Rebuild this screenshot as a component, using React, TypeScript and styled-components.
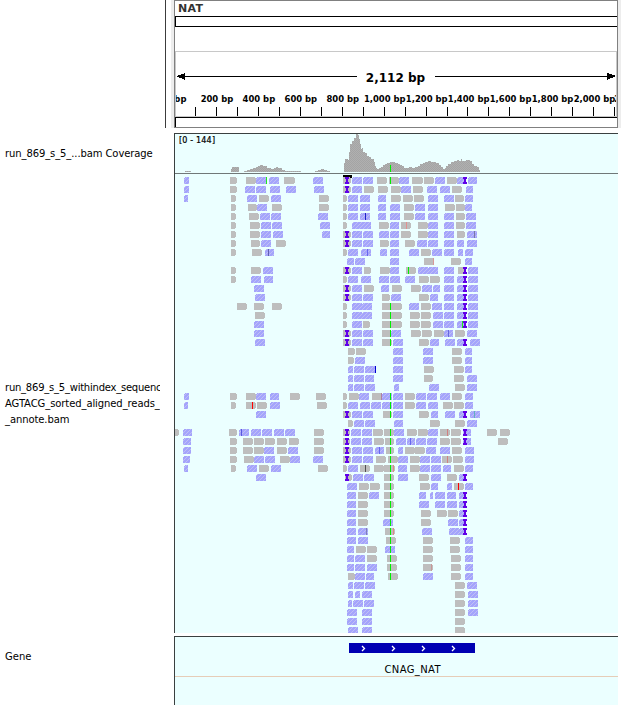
import React from 'react';
import styled, { createGlobalStyle } from 'styled-components';

const GlobalStyle = createGlobalStyle`
  * { box-sizing: border-box; }
  body { margin: 0; background: #fff; font-family: "DejaVu Sans", sans-serif; color: #000; }
`;

const TRACK_X = 175;
const TRACK_W = 443;

const Page = styled.div`
  width: 640px;
  height: 705px;
  overflow: hidden;
  display: flex;
  flex-direction: column;
  background: #fff;
`;

const Header = styled.header`
  display: flex;
  height: 128px;
  padding-left: 165px;
`;

const HeaderGutter = styled.div<{ $width: number; $line?: boolean }>`
  width: ${p => p.$width}px;
  border-left: ${p => (p.$line ? '1px solid #3c3c3c' : 'none')};
  background: ${p => (p.$line ? '#fff' : '#ededed')};
`;

const HeaderBody = styled.div`
  width: 444px;
  display: flex;
  flex-direction: column;
  border: 1px solid #808080;
  background: #fff;
`;

const Chromosome = styled.div`
  height: 15px;
  padding: 0 0 0 3px;
  font: bold 11px/15px "DejaVu Sans", sans-serif;
  letter-spacing: 0.3px;
  color: #333;
`;

const Bar = styled.div<{ $height: number; $open?: boolean }>`
  height: ${p => p.$height}px;
  border: 1px solid #000;
  border-right: 0;
  border-bottom-width: ${p => (p.$open ? 0 : 1)}px;
`;

const RulerFrame = styled.div`
  height: 66px;
  margin-top: 24px;
  border: 1px solid #c8c8c8;
  overflow: hidden;
`;

const Drawing = styled.svg`
  display: block;
  flex: none;
`;

const Track = styled.section<{ $height: number; $gap?: number }>`
  display: flex;
  flex: none;
  height: ${p => p.$height}px;
  margin-top: ${p => p.$gap ?? 0}px;
`;

const TrackName = styled.div<{ $top: number }>`
  width: 160px;
  margin-right: 14px;
  padding: ${p => p.$top}px 0 0 5px;
  overflow: hidden;
`;

const NameLine = styled.div<{ $spacing?: number }>`
  white-space: nowrap;
  font-size: 10px;
  line-height: 16px;
  letter-spacing: ${p => p.$spacing ?? 0}px;
`;

const TrackView = styled.div<{ $top?: boolean }>`
  width: 444px;
  border-left: 1px solid #3a4040;
  border-top: ${p => (p.$top ? '1px solid #3a4040' : 'none')};
  background: #ebffff;
  overflow: hidden;
`;

const READS: string[] = [
  'b184-189 g230-237 g246-256 b256-267 b269-279 g284-295 b313-323 g343-351 b352-362 b363-373 g377-387 g389-399 b399-409 g412-423 g424-434 b435-445 g447-457 b457-466 b468-477',
  'b184-189 g230-237 b245-255 b256-266 b270-280 b286-296 b314-324 g343-351 b352-362 g364-374 g378-388 g391-401 b401-411 g413-423 b427-437 b440-450 g452-462 b466-473',
  'b184-188 g231-236 b247-257 g259-269 b271-281 g319-329 g343-347 b348-358 b360-370 b378-386 g391-401 g403-413 g414-424 b428-438 b444-454 g455-464 b465-473',
  'g231-236 g248-257 b257-267 g272-282 g319-329 g343-347 b348-358 b360-370 b378-386 b390-400 g404-414 b415-425 b428-438 g445-455 g456-465 b465-472',
  'g231-236 g249-259 b260-270 b271-281 b318-328 g343-347 b348-358 b360-370 b378-386 b390-400 g404-414 b415-425 b428-438 b444-454 g456-465 b466-476',
  'g231-236 g250-260 b261-271 b272-282 b320-330 g343-347 b352-362 b361-371 g379-389 b390-399 g401-411 g418-428 b428-438 b444-454 g456-465 b466-476',
  'g231-236 g250-260 b261-271 b273-283 b322-330 g343-351 b352-362 b363-373 b379-389 b390-399 g401-411 g418-428 b428-438 b444-454 g457-465 b467-477',
  'g231-236 g251-260 b261-271 g276-286 g343-351 b352-362 b363-373 g380-389 b390-399 g405-415 b417-427 b428-438 b444-454 b457-464 b467-477',
  'g231-236 g252-262 b265-274 g343-347 b348-358 b361-371 b380-387 b390-399 b409-419 g421-431 b432-442 b444-454 b458-463 b465-473',
  'b347-354 b355-365 b390-399 g424-434 g451-461 b465-472',
  'g231-236 g251-261 b263-273 g343-351 b352-362 g364-371 g380-390 b390-399 g406-416 b418-428 b428-438 b444-454 g458-466 b468-478',
  'g231-236 b251-261 b264-273 g343-347 b348-358 b361-371 b379-389 b390-400 b405-415 g419-429 g430-440 b444-454 b457-466 b468-478',
  'b254-264 g343-351 b352-362 g364-374 b381-389 g392-402 g411-421 b422-432 b433-440 b444-454 b457-466 b468-478',
  'b255-265 g343-351 b352-362 b363-373 g382-390 b391-401 g419-429 b430-438 b444-454 b457-466 b468-478',
  'g237-247 g254-264 g272-282 g343-347 b352-362 b362-372 g382-392 g391-402 b409-419 g421-431 b432-442 b444-454 b457-466 b468-478',
  'g255-265 g343-347 b352-362 b362-372 g382-392 g391-402 g410-420 g421-431 b433-443 b444-454 b457-466 b468-478',
  'b254-264 g343-347 b352-362 g363-370 g382-392 g391-402 g410-420 g421-431 b433-443 b444-454 b457-466 b468-478',
  'b254-264 g343-351 b352-362 b363-373 g382-392 b391-401 g411-421 g422-432 g434-444 b444-453 g455-465 b467-477',
  'b255-265 g343-351 b352-362 b363-373 g382-392 b393-403 g419-429 b430-439 b445-455 b457-466 b470-480',
  'g348-355 g356-366 b393-403 b423-433 g452-462 b465-472',
  'g348-354 b355-365 b393-403 b423-433 g452-462 b465-472',
  'b348-353 b354-364 b365-375 b393-403 g424-434 g454-464 b465-472',
  'b348-353 b354-364 b365-374 b393-403 g424-433 g454-464 b467-477',
  'b348-353 b354-364 b365-375 b394-399 b429-439 g455-465 b467-477',
  'b184-189 g230-237 g246-256 b256-266 b270-279 g290-300 g316-326 g343-347 g349-359 b359-369 g372-382 b382-392 b393-403 g405-415 b416-426 b427-437 b440-450 g452-462 b465-473',
  'b184-188 g231-236 g246-256 g257-267 b270-280 g317-327 g343-347 b348-358 b360-370 b371-381 b382-392 b393-403 g405-415 b416-426 b428-438 g443-453 g454-464 b465-473',
  'b256-266 g343-351 b352-362 b363-373 g383-392 b393-403 g419-429 b431-438 b445-455 b459-466 b470-480',
  'g348-353 b354-364 b365-375 b394-403 g430-440 g455-465 b467-477',
  'g175-179 b183-192 g229-237 b239-249 b251-261 b262-272 b274-284 b285-295 g314-324 g343-350 b351-361 b362-372 g373-383 g384-394 b394-404 g407-417 g418-428 b428-438 g440-450 g451-461 b463-471 g487-497 g500-510',
  'b183-191 g230-237 g243-253 g254-264 g265-275 g277-287 g289-299 g314-324 g343-350 b351-361 b362-372 g374-384 g385-394 b396-406 b407-415 b416-426 b427-437 g440-450 g451-461 b463-471 g498-508',
  'b183-191 g230-237 g243-253 g254-264 b264-274 g277-287 b288-298 g314-324 g343-351 b352-362 b363-373 b375-384 g386-394 b398-403 g405-415 g415-425 b426-436 b440-450 g452-462 b465-474',
  'b183-190 g230-237 g244-254 b254-264 b265-275 g280-290 b290-300 b313-323 g343-351 b352-362 b363-373 g376-386 g388-398 b398-408 g410-420 b420-430 b431-441 g442-452 g453-463 b465-474',
  'b184-188 g231-236 b247-257 g259-269 b271-281 g318-328 g343-347 b348-358 g360-370 g374-384 g384-395 b398-407 g410-420 b420-430 b431-441 b443-451 g454-464 b465-473',
  'b256-266 g345-352 b353-363 b364-374 g384-394 b398-408 g419-429 b431-441 g447-457 b459-466',
  'b347-357 g359-369 g370-380 g384-394 g420-430 b431-438 b447-452 g454-464 b465-473',
  'b347-356 g358-368 b369-379 g384-394 b419-426 b430-433 b435-445 b447-456 b459-466',
  'b347-356 g358-368 g384-394 b419-429 b435-445 b447-457 b459-466',
  'b347-356 g358-368 g384-394 g421-431 g437-447 g448-458 b459-466',
  'b347-356 g358-368 b383-393 g421-431 b448-458 b459-466',
  'b347-356 b358-368 g385-395 b422-432 b449-459 b459-466',
  'b347-356 b358-368 g386-396 g423-433 g450-460 b465-473',
  'b347-354 g356-366 g367-377 b385-395 g423-433 g450-460 b465-473',
  'b347-354 b355-365 g367-377 g387-397 g423-433 g451-461 b465-473',
  'b347-354 b355-365 b367-377 g387-397 g423-433 g451-461 b465-473',
  'g348-355 b355-365 b366-374 g388-398 b423-433 g451-461 b465-473',
  'b348-353 b354-364 b365-375 g455-465 b467-477',
  'b348-353 b355-360 b362-372 g455-465 b468-478',
  'b348-352 b353-363 b364-374 g455-465 b468-478',
  'b347-357 b362-372 g455-465 b468-478',
  'b347-357 b362-372 g455-465',
  'b348-358 b362-372 g455-465',
];

const INSERTIONS: [number, number[]][] = [
  [347, [0, 1, 6, 7, 10, 12, 13, 17, 18, 26, 28, 29, 30, 31, 33]],
  [465, [0, 10, 11, 12, 13, 14, 15, 16, 18, 26, 28, 29, 33, 35, 36, 37, 38, 39]],
];

const MISMATCHES: [number, string, number[]][] = [
  [390, '#00f000', [0, 14, 15, 16, 17, 18, 24, 25, 26, 28, 29, 30, 31, 32, 33, 34, 35, 36, 37, 38, 39, 40, 41, 42, 43, 44]],
  [266, '#20e820', [0]],
  [408, '#00f000', [10]],
  [462, '#20e820', [16]],
  [365, '#2020c8', [4]],
  [365, '#505050', [32]],
  [375, '#0000d0', [21]],
  [252, '#ff0000', [25]],
  [458, '#ff0000', [34]],
  [268, '#6060b0', [8]],
  [367, '#6868ee', [8]],
  [241, '#5858e0', [28]],
  [379, '#6868ee', [30]],
  [410, '#6868ee', [29]],
  [448, '#6868dd', [17]],
  [474, '#7878a8', [6]],
  [474, '#60b0c0', [26]],
  [406, '#e09090', [5]],
  [433, '#d89898', [9]],
  [447, '#d08080', [28, 31]],
  [381, '#b080a0', [24]],
  [393, '#e08888', [32, 39]],
  [431, '#c89898', [43]],
  [366, '#8080b8', [39]],
];

const COVERAGE: [number, number][] = [
  [185, 1], [191, 0], [231, 3], [232, 5], [239, 0],
  [244, 1], [247, 2], [250, 3], [253, 4], [256, 5], [258, 6], [260, 7], [263, 6], [267, 4], [271, 3],
  [274, 4], [276, 5], [278, 4], [282, 2], [285, 1], [301, 0],
  [315, 1], [318, 2], [321, 3], [324, 2], [327, 1], [330, 0],
  [344, 9], [345, 13], [348, 12], [349, 20], [350, 28], [352, 31], [354, 34], [356, 38], [358, 37], [359, 33], [360, 28],
  [361, 23], [362, 24], [363, 20], [365, 19], [367, 16], [369, 15], [371, 13], [374, 10], [375, 6], [376, 4],
  [377, 3], [379, 4], [381, 5], [383, 7], [385, 8], [387, 9], [390, 10], [393, 10], [395, 9], [398, 8], [400, 7],
  [402, 6], [404, 4], [407, 4], [409, 5], [412, 4], [415, 5], [418, 6], [420, 8], [423, 9], [425, 10],
  [428, 11], [431, 10], [436, 9], [439, 7], [441, 5], [443, 3], [445, 4], [446, 6], [448, 8], [451, 10],
  [454, 11], [457, 12], [459, 11], [461, 13], [462, 11], [466, 12], [470, 11], [472, 8], [474, 6], [477, 5], [479, 2], [480, 0],
];

const parseRow = (row: string) =>
  row.split(' ').map(item => {
    const [from, to] = item.slice(1).split('-').map(Number);
    return { forward: item[0] === 'g', from, to };
  });

function Read({ forward, from, to, y }: { forward: boolean; from: number; to: number; y: number }) {
  const d = forward
    ? `M${from} ${y}H${to - 1}V${y + 1}H${to}V${y + 6}H${to - 1}V${y + 7}H${from}Z`
    : `M${from + 1} ${y}H${to}V${y + 7}H${from}V${y + 1}H${from + 1}Z`;
  return <path d={d} fill={forward ? '#bebebe' : 'url(#reverse)'} />;
}

function Ruler() {
  const kilo = (n: number) => (n >= 1000 ? `${Math.floor(n / 1000)},${String(n % 1000).padStart(3, '0')}` : String(n));
  const labelX = (i: number) => (i === 0 ? 176 : i === 11 ? 635 : 175 + i * 41.95);
  return (
    <Drawing width={440} height={64} viewBox="176 52 440 64">
      <g shapeRendering="crispEdges">
        <path d="M184 76H357V77H184ZM435 76H608V77H435Z" />
        <path d="M176 76L185 73V80ZM616 76L607 73V80Z" />
        {Array.from({ length: 21 }, (_, i) => (
          <rect key={i} x={Math.round(195 + i * 20.96)} y={107} width={1} height={9} />
        ))}
      </g>
      <text x={395.5} y={82} textAnchor="middle" fontSize={12} fontWeight="bold">2,112 bp</text>
      {Array.from({ length: 12 }, (_, i) => (
        <text
          key={i}
          x={labelX(i)}
          y={102}
          textAnchor="middle"
          fontSize={9.4}
          fontWeight="bold"
          fontFamily='"DejaVu Sans Condensed", "DejaVu Sans", sans-serif'
          fontStretch="condensed"
        >
          {`${kilo(i * 200)} bp`}
        </text>
      ))}
    </Drawing>
  );
}

function Coverage() {
  let d = 'M175 172';
  COVERAGE.forEach(([x, h]) => { d += `H${x}V${172 - h}`; });
  return (
    <Drawing width={TRACK_W} height={40} viewBox={`${TRACK_X} 134 ${TRACK_W} 40`} shapeRendering="crispEdges">
      <defs>
        <pattern id="depth" width={2} height={2} patternUnits="userSpaceOnUse">
          <rect width={2} height={2} fill="#b0b0b0" />
          <path d="M0 0H1V1H0ZM1 1H2V2H1Z" fill="#a4a4a4" />
        </pattern>
      </defs>
      <path d={`${d}V172Z`} fill="url(#depth)" />
      <rect x={390} y={165} width={1} height={7} fill="#00f000" />
      <rect x={175} y={173} width={443} height={1} fill="#707878" />
      <text x={179} y={143} fontSize={8} stroke="#000" strokeWidth={0.2} textLength={36}>[0 - 144]</text>
    </Drawing>
  );
}

function Alignments() {
  return (
    <Drawing width={TRACK_W} height={459} viewBox={`${TRACK_X} 174 ${TRACK_W} 459`} shapeRendering="crispEdges">
      <defs>
        <pattern id="reverse" width={4} height={4} patternUnits="userSpaceOnUse">
          <rect width={4} height={4} fill="#a4a4fc" />
          <path d="M3 0H4V1H3ZM2 1H3V2H2ZM1 2H2V3H1ZM0 3H1V4H0Z" fill="#c0c0f4" />
        </pattern>
      </defs>
      <rect x={343} y={175} width={9} height={3} />
      {READS.map((row, i) => parseRow(row).map((r, j) => <Read key={`${i}-${j}`} {...r} y={177 + i * 9} />))}
      {MISMATCHES.map(([x, color, rows]) =>
        rows.map(i => <rect key={`${x}-${i}`} x={x} y={177 + i * 9} width={1} height={7} fill={color} />))}
      {INSERTIONS.map(([x, rows]) =>
        rows.map(i => {
          const y = 177 + i * 9;
          return <path key={`${x}-${i}`} fill="#6000e8" d={`M${x - 2} ${y}h4v2h-1v3h1v2h-4v-2h1v-3h-1Z`} />;
        }))}
    </Drawing>
  );
}

function GeneModel() {
  return (
    <Drawing width={TRACK_W} height={68} viewBox={`${TRACK_X} 637 ${TRACK_W} 68`}>
      <rect x={349} y={643} width={126} height={10} fill="#0000b2" />
      {[362, 392, 422, 452].map(x => (
        <path key={x} d={`M${x} 646L${x + 2.5} 648.5L${x} 651`} fill="none" stroke="#fff" strokeWidth={1.3} />
      ))}
      <text x={412.5} y={673} fontSize={10} textAnchor="middle" textLength={56}>CNAG_NAT</text>
      <rect x={175} y={676} width={443} height={1} fill="#e6cdb8" />
    </Drawing>
  );
}

export default function App() {
  return (
    <Page>
      <GlobalStyle />
      <Header>
        <HeaderGutter $width={6} $line />
        <HeaderGutter $width={3} />
        <HeaderBody>
          <Chromosome>NAT</Chromosome>
          <Bar $height={11} />
          <RulerFrame><Ruler /></RulerFrame>
          <Bar $height={10} $open />
        </HeaderBody>
        <HeaderGutter $width={3} />
      </Header>
      <Track $height={41} $gap={5}>
        <TrackName $top={13}>
          <NameLine $spacing={-0.1}>run_869_s_5_...bam Coverage</NameLine>
        </TrackName>
        <TrackView $top><Coverage /></TrackView>
      </Track>
      <Track $height={459}>
        <TrackName $top={206}>
          <NameLine $spacing={-0.23}>run_869_s_5_withindex_sequenc</NameLine>
          <NameLine $spacing={-0.09}>AGTACG_sorted_aligned_reads_</NameLine>
          <NameLine $spacing={-0.09}>_annote.bam</NameLine>
        </TrackName>
        <TrackView><Alignments /></TrackView>
      </Track>
      <Track $height={69} $gap={3}>
        <TrackName $top={13}><NameLine>Gene</NameLine></TrackName>
        <TrackView $top><GeneModel /></TrackView>
      </Track>
    </Page>
  );
}
